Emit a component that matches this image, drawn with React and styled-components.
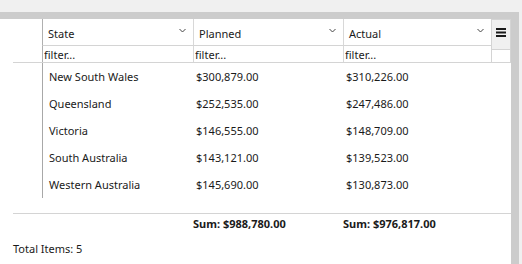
import React from 'react';
import styled, { createGlobalStyle } from 'styled-components';

const GlobalStyle = createGlobalStyle`
    html, body {
        margin: 0;
        padding: 0;
        background: #f0f0f0;
    }
    body {
        font-family: 'Segoe UI', 'Noto Sans', sans-serif;
        font-size: 11px;
        color: #1a1a1a;
    }
`;

const columnas = [
    { campo: 'estado', titulo: 'State' },
    { campo: 'planeado', titulo: 'Planned' },
    { campo: 'real', titulo: 'Actual' },
];

const filas = [
    { estado: 'New South Wales', planeado: 300879, real: 310226 },
    { estado: 'Queensland', planeado: 252535, real: 247486 },
    { estado: 'Victoria', planeado: 146555, real: 148709 },
    { estado: 'South Australia', planeado: 143121, real: 139523 },
    { estado: 'Western Australia', planeado: 145690, real: 130873 },
];

const moneda = (n) =>
    '$' + n.toLocaleString('en-US', { minimumFractionDigits: 2, maximumFractionDigits: 2 });

// ancho de cada columna: esquina, State, Planned, Actual
const COLS = '29px 151px 150px 148px';

const Chevron = () => (
    <svg width="7" height="5" viewBox="0 0 7 5">
        <polyline points="0.5,1 3.5,4 6.5,1" fill="none" stroke="#444" strokeWidth="1" />
    </svg>
);

const MenuIcon = () => (
    <svg width="10" height="9" viewBox="0 0 10 9">
        <rect x="0" y="0" width="10" height="2" fill="#1a1a1a" />
        <rect x="0" y="3.5" width="10" height="2" fill="#1a1a1a" />
        <rect x="0" y="7" width="10" height="2" fill="#1a1a1a" />
    </svg>
);

const App = () => {
    const sumaPlaneado = filas.reduce((a, f) => a + f.planeado, 0);
    const sumaReal = filas.reduce((a, f) => a + f.real, 0);

    return (
        <>
            <GlobalStyle />
            <Pagina>
                <Marco>
                    <Grilla>
                        <Encabezado>
                            <Esquina />
                            {columnas.map((c) => (
                                <CeldaTitulo key={c.campo}>
                                    <span>{c.titulo}</span>
                                    <Chevron />
                                </CeldaTitulo>
                            ))}
                            <ColumnaMenu>
                                <BotonMenu>
                                    <MenuIcon />
                                </BotonMenu>
                                <FiltroVacio />
                            </ColumnaMenu>
                            <Esquina />
                            {columnas.map((c) => (
                                <CeldaFiltro key={c.campo}>
                                    <Filtro placeholder="filter..." />
                                </CeldaFiltro>
                            ))}
                        </Encabezado>

                        <Cuerpo>
                            {filas.map((f) => (
                                <Fila key={f.estado}>
                                    <Esquina />
                                    <Celda $primera>{f.estado}</Celda>
                                    <Celda>{moneda(f.planeado)}</Celda>
                                    <Celda>{moneda(f.real)}</Celda>
                                </Fila>
                            ))}
                        </Cuerpo>

                        <Totales>
                            <Esquina />
                            <span />
                            <Suma>Sum: {moneda(sumaPlaneado)}</Suma>
                            <Suma>Sum: {moneda(sumaReal)}</Suma>
                        </Totales>

                        <Pie>Total Items: {filas.length}</Pie>
                    </Grilla>
                </Marco>
            </Pagina>
        </>
    );
};

export default App;

const Pagina = styled.div`
    padding-top: 12px;
    padding-right: 3px;
`;

const Marco = styled.div`
    background: #cccccc;
    padding: 7px 8px 0 0;
    height: 252px;
    box-sizing: border-box;
`;

const Grilla = styled.div`
    background: #ffffff;
    height: 245px;
    overflow: hidden;
`;

const Encabezado = styled.div`
    display: grid;
    grid-template-columns: ${COLS} 20px;
    grid-template-rows: 27px 16px;
    border-bottom: 1px solid #d4d4d4;
    margin-left: 13px;
`;

const Esquina = styled.div``;

const CeldaTitulo = styled.div`
    display: flex;
    align-items: center;
    justify-content: space-between;
    padding: 2px 7px 0 5px;
    border-left: 1px solid #b0b0b0;
    border-bottom: 1px solid #d4d4d4;
    box-sizing: border-box;
    & + & {
        border-left: 1px solid #d8d8d8;
    }
    svg {
        margin-bottom: 5px;
    }
`;

const ColumnaMenu = styled.div`
    grid-row: 1 / span 2;
    grid-column: 5;
    display: flex;
    flex-direction: column;
`;

const BotonMenu = styled.div`
    height: 31px;
    background: #f0f0f0;
    border: 1px solid #d4d4d4;
    box-sizing: border-box;
    display: flex;
    justify-content: center;
    padding-top: 8px;
`;

const FiltroVacio = styled.div`
    flex: 1;
    border: 1px solid #d4d4d4;
    border-top: none;
    border-bottom: none;
`;

const CeldaFiltro = styled.div`
    display: flex;
    border-left: 1px solid #b0b0b0;
    & + & {
        border-left: 1px solid #d8d8d8;
    }
`;

const Filtro = styled.input`
    flex: 1;
    min-width: 0;
    border: none;
    outline: none;
    padding: 1px 1px 0;
    margin: 0;
    font: inherit;
    line-height: 15px;
    color: #1a1a1a;
    background: #fff;
    &::placeholder {
        color: #1a1a1a;
        opacity: 1;
    }
`;

const Cuerpo = styled.div`
    height: 135px;
    margin-left: 13px;
    display: flex;
    flex-direction: column;
`;

const Fila = styled.div`
    display: grid;
    grid-template-columns: ${COLS};
    height: 27px;
`;

const Celda = styled.div`
    display: flex;
    align-items: center;
    padding-left: ${(p) => (p.$primera ? '6px' : '3px')};
    border-left: ${(p) => (p.$primera ? '1px solid #a8a8a8' : 'none')};
`;

const Totales = styled.div`
    display: grid;
    grid-template-columns: ${COLS};
    margin-top: 15px;
    margin-left: 13px;
    border-top: 1px solid #d4d4d4;
    height: 18px;
    align-items: center;
`;

const Suma = styled.div`
    font-weight: 700;
`;

const Pie = styled.div`
    margin: 9px 0 0 13px;
`;
